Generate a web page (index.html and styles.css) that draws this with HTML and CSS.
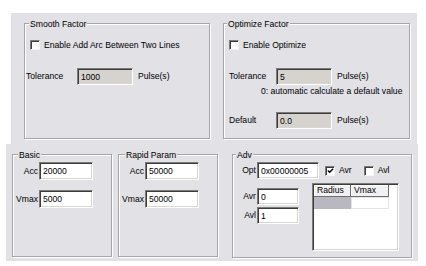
FILE: index.html
```html
<!DOCTYPE html>
<html lang="en">
<head>
  <meta charset="UTF-8" />
  <title>Motion Parameters</title>
  <link rel="stylesheet" href="styles.css">
</head>
<body>

  <div class="panel panel-top">
    <div class="group group-smooth">
      <div class="group-title">Smooth Factor</div>
      <div class="check-row">
        <span class="check"></span>
        <span>Enable Add Arc Between Two Lines</span>
      </div>
      <div class="field-row">
        <span class="lbl">Tolerance</span>
        <input class="box readonly" type="text" value="1000" readonly />
        <span class="unit">Pulse(s)</span>
      </div>
    </div>

    <div class="group group-optimize">
      <div class="group-title">Optimize Factor</div>
      <div class="check-row">
        <span class="check"></span>
        <span>Enable Optimize</span>
      </div>
      <div class="field-row">
        <span class="lbl">Tolerance</span>
        <input class="box readonly" type="text" value="5" readonly />
        <span class="unit">Pulse(s)</span>
      </div>
      <p class="hint">0: automatic calculate a default value</p>
      <div class="field-row default-row">
        <span class="lbl">Default</span>
        <input class="box readonly" type="text" value="0.0" readonly />
        <span class="unit">Pulse(s)</span>
      </div>
    </div>
  </div>

  <div class="panel panel-bottom">
    <div class="group group-small">
      <div class="group-title">Basic</div>
      <div class="param-row">
        <span class="plbl">Acc</span>
        <input class="box" type="text" value="20000" />
      </div>
      <div class="param-row second">
        <span class="plbl">Vmax</span>
        <input class="box" type="text" value="5000" />
      </div>
    </div>

    <div class="group group-small group-rapid">
      <div class="group-title">Rapid Param</div>
      <div class="param-row">
        <span class="plbl">Acc</span>
        <input class="box" type="text" value="50000" />
      </div>
      <div class="param-row second">
        <span class="plbl">Vmax</span>
        <input class="box" type="text" value="50000" />
      </div>
    </div>

    <div class="group group-adv">
      <div class="group-title">Adv</div>
      <div class="adv-top">
        <span class="alb">Opt</span>
        <input class="box opt" type="text" value="0x00000005" />
        <span class="check checked">
          <svg width="8" height="8" viewBox="0 0 8 8"><path d="M1 3.5 L3 5.5 L7 1.5" fill="none" stroke="#000" stroke-width="1.6"/></svg>
        </span>
        <span class="ck-text">Avr</span>
        <span class="check avl-check"></span>
        <span class="ck-text">Avl</span>
      </div>
      <div class="adv-bottom">
        <div class="adv-fields">
          <div class="adv-row">
            <span class="alb">Avr</span>
            <input class="box short" type="text" value="0" />
          </div>
          <div class="adv-row next">
            <span class="alb">Avl</span>
            <input class="box short" type="text" value="1" />
          </div>
        </div>
        <div class="listview">
          <div class="lv-head">
            <span class="lv-col c1">Radius</span>
            <span class="lv-col c2">Vmax</span>
          </div>
          <div class="lv-row">
            <span class="lv-cell sel"></span>
            <span class="lv-cell c2"></span>
          </div>
        </div>
      </div>
    </div>
  </div>

</body>
</html>
```

FILE: styles.css
```css
* {
  margin: 0;
  padding: 0;
  box-sizing: border-box;
}

body {
  background: #fff;
  font-family: "Liberation Sans", Arial, sans-serif;
  font-size: 8.6px;
  line-height: 11px;
  color: #000;
}

.panel {
  background: #e2e1e6;
  display: flex;
  align-items: flex-start;
}

.panel-top {
  width: 406px;
  height: 131px;
  margin: 13px 0 0 11px;
  padding: 10px 0 0 13px;
  gap: 13px;
}

.panel-bottom {
  width: 412px;
  height: 117px;
  margin-left: 6px;
  padding: 10px 0 0 6px;
}

/* etched group box */
.group {
  border: 1px solid #a6a5aa;
  box-shadow: inset 1px 1px 0 #fff, 1px 1px 0 #fff;
}

.group-title {
  width: max-content;
  margin: -5px 0 0 4px;
  padding: 0 1px;
  background: #e2e1e6;
}

.group-smooth {
  width: 186px;
  height: 116px;
}

.group-optimize {
  width: 187px;
  height: 116px;
}

.group-optimize .group-title {
  margin-left: 3px;
}

/* checkbox */
.check {
  width: 10px;
  height: 10px;
  background: #fff;
  border-top: 1px solid #7b7b7b;
  border-left: 1px solid #7b7b7b;
  border-right: 1px solid #f4f4f4;
  border-bottom: 1px solid #f4f4f4;
  box-shadow: inset 1px 1px 0 #3c3c3c;
  display: flex;
  align-items: center;
  justify-content: center;
  flex-shrink: 0;
}

.check svg {
  margin: 1px 0 0 1px;
}

.check-row {
  display: flex;
  align-items: center;
  gap: 4px;
  height: 10px;
  margin-top: 10px;
  padding-left: 5px;
}

/* edit boxes */
.box {
  display: block;
  font: inherit;
  color: #000;
  background: #fff;
  border-top: 1px solid #7b7b7b;
  border-left: 1px solid #7b7b7b;
  border-right: 1px solid #fff;
  border-bottom: 1px solid #fff;
  box-shadow: inset 1px 1px 0 #3c3c3c, inset -1px -1px 0 #d8d6d1;
  padding: 0 2px 0 3px;
  outline: none;
}

.box.readonly {
  background: #d6d3ce;
}

.field-row {
  display: flex;
  align-items: center;
  margin-top: 18px;
  padding-left: 1px;
}

.field-row .lbl {
  width: 51px;
}

.field-row .box {
  width: 56px;
  height: 17px;
}

.field-row .unit {
  margin-left: 5px;
}

.group-optimize .field-row {
  padding-left: 5px;
}

.group-optimize .field-row .lbl {
  width: 47px;
}

.hint {
  margin-top: 1px;
  padding-left: 37px;
}

.field-row.default-row {
  margin-top: 15px;
}

/* bottom groups */
.group-small {
  width: 100px;
  height: 103px;
}

.group-small .group-title {
  margin-left: 5px;
}

.group-rapid {
  margin-left: 6px;
}

.group-rapid .group-title {
  margin-left: 6px;
}

.param-row {
  display: flex;
  align-items: center;
  margin-top: 1px;
}

.param-row.second {
  margin-top: 10px;
}

.plbl {
  width: 26px;
  text-align: right;
  padding-right: 1px;
}

.param-row .box {
  width: 54px;
  height: 18px;
}

.group-adv {
  width: 180px;
  height: 104px;
  margin-left: 14px;
}

.group-adv .group-title {
  margin-left: 3px;
}

.alb {
  width: 24px;
  text-align: right;
  padding-right: 1px;
}

.adv-top {
  display: flex;
  align-items: center;
  margin-top: 1px;
}

.box.opt {
  width: 62px;
  height: 17px;
}

.adv-top .check {
  margin-left: 6px;
}

.adv-top .check.avl-check {
  margin-left: 12px;
}

.ck-text {
  margin-left: 4px;
}

.adv-bottom {
  display: flex;
  margin-top: 4px;
}

.adv-fields {
  padding-top: 5px;
}

.adv-row {
  display: flex;
  align-items: center;
}

.adv-row.next {
  margin-top: 2px;
}

.box.short {
  width: 42px;
  height: 17px;
}

/* list view */
.listview {
  width: 87px;
  height: 68px;
  margin-left: 13px;
  background: #fff;
  border-top: 1px solid #7b7b7b;
  border-left: 1px solid #7b7b7b;
  border-right: 1px solid #fff;
  border-bottom: 1px solid #fff;
  box-shadow: inset 1px 1px 0 #3c3c3c, inset -1px -1px 0 #d8d6d1;
  padding: 1px;
}

.lv-head {
  display: flex;
  height: 12px;
}

.lv-col {
  height: 12px;
  line-height: 10px;
  padding-left: 3px;
  background: #f1f1f3;
  border-right: 1px solid #6e6e6e;
  border-bottom: 1px solid #6e6e6e;
  box-shadow: inset 1px 1px 0 #fff;
}

.c1 {
  width: 37px;
}

.c2 {
  width: 38px;
}

.lv-row {
  display: flex;
  height: 12px;
}

.lv-cell {
  height: 12px;
}

.lv-cell.sel {
  width: 37px;
  background: #b9b8c0;
}

.lv-cell.c2 {
  border: 1px solid #e4e4e8;
}
```
